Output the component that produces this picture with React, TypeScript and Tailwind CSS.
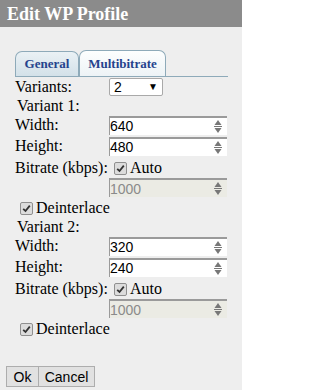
import React from "react";

const serif = "[font-family:'Liberation_Serif','Times_New_Roman',serif]";
const sans = "[font-family:'Liberation_Sans',Arial,sans-serif]";

const Spinner = () => (
  <svg width="8" height="13" viewBox="0 0 8 13" className="shrink-0">
    <path d="M4 0 L7.5 5 L0.5 5 Z" fill="#777" />
    <rect x="0" y="6" width="8" height="1" fill="#777" />
    <path d="M0.5 8 L7.5 8 L4 13 Z" fill="#777" />
  </svg>
);

const NumberBox = ({ value, disabled }: { value: string; disabled?: boolean }) => (
  <div
    className={`flex items-center w-[118px] h-[19px] border-t-2 border-l border-t-[#9a9a9a] border-l-[#9a9a9a] pr-[5px] ${
      disabled ? "bg-[#ebebe4] text-[#8a8a8a]" : "bg-white text-black"
    }`}
  >
    <span className={`${sans} text-[14px] leading-none flex-1`}>{value}</span>
    <Spinner />
  </div>
);

const Check = () => (
  <span className="inline-flex items-center justify-center w-[13px] h-[13px] rounded-[2px] border border-[#8f8f8f] bg-[#dcdcdc] shrink-0">
    <svg width="9" height="9" viewBox="0 0 9 9">
      <path d="M1.2 4.8 L3.5 7 L7.8 1.6" stroke="#333" strokeWidth="1.8" fill="none" />
    </svg>
  </span>
);

const Variant = ({ n, w, h }: { n: number; w: string; h: string }) => (
  <>
    <div className="h-[18px] flex items-center pl-[2px]">Variant {n}:</div>
    <div className="h-[20px] flex items-center">
      <span className="w-[94px]">Width:</span>
      <NumberBox value={w} />
    </div>
    <div className="h-[1px]" />
    <div className="h-[20px] flex items-center">
      <span className="w-[94px]">Height:</span>
      <NumberBox value={h} />
    </div>
    <div className="h-[21px] flex items-center pt-[3px]">
      <span className="w-[99px]">Bitrate (kbps):</span>
      <Check />
      <span className="ml-[3px]">Auto</span>
    </div>
    <div className="h-[21px] flex items-center pl-[94px]">
      <NumberBox value="1000" disabled />
    </div>
    <div className="h-[20px] flex items-center pl-[5px]">
      <Check />
      <span className="ml-[3px]">Deinterlace</span>
    </div>
  </>
);

export default function App() {
  return (
    <div className={`w-[242px] h-[390px] bg-[#eeeeee] ${serif} text-[16px] text-black overflow-hidden`}>
      <div className="h-[27px] bg-[#8b8b8b] flex items-center pl-[7px]">
        <span className="text-white font-bold text-[18px] leading-none">Edit WP Profile</span>
      </div>

      <div className="pt-[24px] pl-[15px] pr-[14px]">
        {/* Tabs */}
        <div className="flex items-end h-[26px] border-b border-[#8eaab9]">
          <div className="h-[25px] w-[64px] flex items-center justify-center rounded-t-[7px] border border-b-0 border-[#8eaab9] bg-gradient-to-b from-[#eaf1f5] to-[#d3e1e9] text-[#25438d] font-bold text-[13px]">
            General
          </div>
          <div className="h-[26px] w-[87px] flex items-center justify-center rounded-t-[7px] border border-b-0 border-[#8eaab9] bg-gradient-to-b from-[#fdfefe] to-[#edf3f6] text-[#25438d] font-bold text-[13px]">
            Multibitrate
          </div>
        </div>

        {/* Variants */}
        <div className="h-[20px] flex items-center">
          <span className="w-[94px]">Variants:</span>
          <div className="flex items-center justify-between w-[54px] h-[18px] bg-white border border-[#a9a9a9] rounded-[2px] px-[4px]">
            <span className={`${sans} text-[14px] leading-none`}>2</span>
            <span className="text-[10px] leading-none">▼</span>
          </div>
        </div>

        <Variant n={1} w="640" h="480" />
        <Variant n={2} w="320" h="240" />
      </div>

      <div className="pt-[27px] pl-[6px] flex">
        <button className={`${sans} text-[14px] h-[21px] w-[33px] bg-[#e1e1e1] border border-[#adadad]`}>Ok</button>
        <button className={`${sans} text-[14px] h-[21px] w-[57px] bg-[#e1e1e1] border border-[#adadad] -ml-[1px]`}>Cancel</button>
      </div>
    </div>
  );
}
